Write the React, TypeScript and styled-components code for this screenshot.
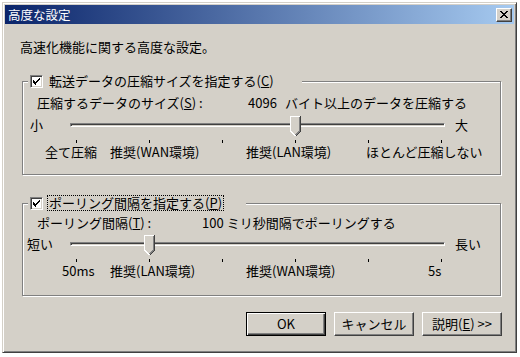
import React from 'react'
import styled, { createGlobalStyle } from 'styled-components'

const GlobalStyle = createGlobalStyle`
  html, body {
    margin: 0;
    padding: 0;
    background: #fff;
  }
  body {
    font-family: "Noto Sans CJK JP", "Noto Sans", sans-serif;
    font-size: 13px;
    line-height: 16px;
    color: #000;
  }
`

const Window = styled.div`
  box-sizing: border-box;
  width: 515px;
  height: 351px;
  margin: 2px 0 0 2px;
  padding: 2px;
  background: #d4d0c8;
  border: 1px solid;
  border-color: #d4d0c8 #404040 #404040 #d4d0c8;
  box-shadow: inset 1px 1px #fff, inset -1px -1px #808080;
  display: flex;
  flex-direction: column;
`

const TitleBar = styled.div`
  height: 19px;
  flex: none;
  display: flex;
  align-items: center;
  justify-content: space-between;
  padding: 0 2px 0 3px;
  font-size: 12.5px;
  background: linear-gradient(to right, #0a246a, #a6caf0);
  color: #fff;
`

const CloseButton = styled.div`
  box-sizing: border-box;
  width: 16px;
  height: 14px;
  display: flex;
  align-items: center;
  justify-content: center;
  background: #d4d0c8;
  border: 1px solid;
  border-color: #fff #404040 #404040 #fff;
  box-shadow: inset -1px -1px #808080;
`

const Body = styled.div`
  display: flex;
  flex-direction: column;
  padding-left: 17px;
`

const Intro = styled.div`
  margin: 15px 0 0 -2px;
`

const Group = styled.fieldset<{ $top: number; $bottom: number }>`
  box-sizing: border-box;
  width: 479px;
  min-width: 0;
  margin: ${p => p.$top}px 0 0;
  padding: 0 0 ${p => p.$bottom}px;
  border: 1px solid #808080;
  box-shadow: inset 1px 1px #fff, 1px 1px #fff;
`

const Legend = styled.legend<{ $width: number }>`
  box-sizing: border-box;
  width: ${p => p.$width}px;
  height: 16px;
  margin-left: 5px;
  padding: 0 0 0 2px;
  display: flex;
  align-items: center;
  background: #d4d0c8;
  white-space: nowrap;
`

const CheckBox = styled.span`
  box-sizing: border-box;
  width: 13px;
  height: 13px;
  flex: none;
  display: flex;
  align-items: center;
  justify-content: center;
  background: #fff;
  border: 1px solid;
  border-color: #808080 #fff #fff #808080;
  box-shadow: inset 1px 1px #404040, inset -1px -1px #d4d0c8;
`

const CheckLabel = styled.span<{ $focused?: boolean }>`
  margin-left: ${p => (p.$focused ? 4 : 5)}px;
  padding: 0 ${p => (p.$focused ? 1 : 0)}px;
  line-height: 14px;
  border: 1px ${p => (p.$focused ? 'dotted #000' : 'solid transparent')};
`

const ValueRow = styled.div<{ $top: number }>`
  display: flex;
  margin-top: ${p => p.$top}px;
  padding-left: 14px;
  white-space: nowrap;
`

const Caption = styled.span<{ $width: number }>`
  width: ${p => p.$width}px;
  flex: none;
`

const Amount = styled.span<{ $gap: number }>`
  margin-right: ${p => p.$gap}px;
`

const SliderRow = styled.div<{ $top: number }>`
  display: grid;
  grid-template-columns: 47px 375px 1fr;
  align-items: center;
  height: 22px;
  margin-top: ${p => p.$top}px;
  white-space: nowrap;
`

const EndLabel = styled.span<{ $pad: number }>`
  padding-left: ${p => p.$pad}px;
`

const TrackArea = styled.div`
  position: relative;
  height: 22px;
  display: flex;
  align-items: center;
`

const Channel = styled.div`
  box-sizing: border-box;
  width: 100%;
  height: 4px;
  background: #d4d0c8;
  border: 1px solid;
  border-color: #808080 #fff #fff #808080;
  box-shadow: inset 1px 1px #404040;
`

const Thumb = styled.svg`
  position: absolute;
  top: 2px;
  display: block;
`

const Ticks = styled.div<{ $top: number }>`
  display: flex;
  justify-content: space-between;
  width: 366px;
  height: 3px;
  margin: ${p => p.$top}px 0 0 53px;
`

const Tick = styled.span`
  width: 1px;
  background: #000;
`

const ScaleLabels = styled.div<{ $pad: number; $cols: string }>`
  display: grid;
  grid-template-columns: ${p => p.$cols};
  padding-left: ${p => p.$pad}px;
  margin-top: 1px;
  white-space: nowrap;
`

const ButtonRow = styled.div`
  display: flex;
  justify-content: flex-end;
  gap: 8px;
  margin-top: 16px;
  padding-right: 12px;
`

const Button = styled.button<{ $default?: boolean }>`
  box-sizing: border-box;
  width: 80px;
  height: 24px;
  padding: 0;
  font: inherit;
  color: #000;
  background: #d4d0c8;
  border: 1px solid;
  border-color: ${p => (p.$default ? '#000' : '#fff #404040 #404040 #fff')};
  box-shadow: ${p =>
    p.$default
      ? 'inset 1px 1px #fff, inset -1px -1px #404040, inset -2px -2px #808080'
      : 'inset -1px -1px #808080'};
`

const Key = styled.u`
  text-decoration: underline;
`

const TICK_STEP = 73

function SliderThumb({ index }: { index: number }) {
  return (
    <Thumb
      width="11"
      height="21"
      viewBox="0 0 11 21"
      shapeRendering="crispEdges"
      style={{ left: 1 + index * TICK_STEP }}
    >
      <polygon points="0,0 11,0 11,15 5.5,21 0,15" fill="#d4d0c8" />
      <polyline points="0.5,15 0.5,0.5 10,0.5" fill="none" stroke="#fff" />
      <polyline points="0.5,15 5.5,20" fill="none" stroke="#fff" />
      <polyline points="9.5,1 9.5,15 5.5,19" fill="none" stroke="#808080" />
      <polyline points="10.5,0 10.5,15.5 5.5,20.5" fill="none" stroke="#404040" />
    </Thumb>
  )
}

function Check() {
  return (
    <svg width="7" height="7" viewBox="0 0 7 7" shapeRendering="crispEdges">
      <path d="M0 2h1v1h-1zM0 3h2v1h-2zM0 4h3v1h-3zM1 5h2v1h-2zM2 6h1v1h-1zM3 3h1v2h-1zM4 2h1v2h-1zM5 1h1v2h-1zM6 0h1v2h-1z" fill="#000" />
    </svg>
  )
}

function Slider({
  left,
  right,
  leftPad,
  index,
  top,
}: {
  left: string
  right: string
  leftPad: number
  index: number
  top: number
}) {
  return (
    <>
      <SliderRow $top={top}>
        <EndLabel $pad={leftPad}>{left}</EndLabel>
        <TrackArea>
          <Channel />
          <SliderThumb index={index} />
        </TrackArea>
        <EndLabel $pad={10}>{right}</EndLabel>
      </SliderRow>
      <Ticks $top={4}>
        {[0, 1, 2, 3, 4, 5].map(i => (
          <Tick key={i} />
        ))}
      </Ticks>
    </>
  )
}

export default function App() {
  return (
    <>
      <GlobalStyle />
      <Window>
        <TitleBar>
          <span>高度な設定</span>
          <CloseButton>
            <svg width="8" height="7" viewBox="0 0 8 7" shapeRendering="crispEdges">
              <path
                d="M0 0h2v1h-2zM6 0h2v1h-2zM1 1h2v1h-2zM5 1h2v1h-2zM2 2h4v1h-4zM3 3h2v1h-2zM2 4h4v1h-4zM1 5h2v1h-2zM5 5h2v1h-2zM0 6h2v1h-2zM6 6h2v1h-2z"
                fill="#000"
              />
            </svg>
          </CloseButton>
        </TitleBar>
        <Body>
          <Intro>高速化機能に関する高度な設定。</Intro>

          <Group $top={18} $bottom={14}>
            <Legend $width={274}>
              <CheckBox>
                <Check />
              </CheckBox>
              <CheckLabel>
                転送データの圧縮サイズを指定する(<Key>C</Key>)
              </CheckLabel>
            </Legend>
            <ValueRow $top={6}>
              <Caption $width={211}>
                圧縮するデータのサイズ(<Key>S</Key>) :
              </Caption>
              <Amount $gap={8}>4096</Amount>
              <span>バイト以上のデータを圧縮する</span>
            </ValueRow>
            <Slider left="小" right="大" leftPad={7} index={3} top={3} />
            <ScaleLabels $pad={22} $cols="65px 136px 120px auto">
              <span>全て圧縮</span>
              <span>推奨(WAN環境)</span>
              <span>推奨(LAN環境)</span>
              <span>ほとんど圧縮しない</span>
            </ScaleLabels>
          </Group>

          <Group $top={20} $bottom={16}>
            <Legend $width={218}>
              <CheckBox>
                <Check />
              </CheckBox>
              <CheckLabel $focused>
                ポーリング間隔を指定する(<Key>P</Key>)
              </CheckLabel>
            </Legend>
            <ValueRow $top={4}>
              <Caption $width={165}>
                ポーリング間隔(<Key>T</Key>) :
              </Caption>
              <Amount $gap={3}>100</Amount>
              <span>ミリ秒間隔でポーリングする</span>
            </ValueRow>
            <Slider left="短い" right="長い" leftPad={4} index={1} top={2} />
            <ScaleLabels $pad={39} $cols="48px 136px 182px auto">
              <span>50ms</span>
              <span>推奨(LAN環境)</span>
              <span>推奨(WAN環境)</span>
              <span>5s</span>
            </ScaleLabels>
          </Group>

          <ButtonRow>
            <Button $default>OK</Button>
            <Button>キャンセル</Button>
            <Button>
              説明(<Key>E</Key>) &gt;&gt;
            </Button>
          </ButtonRow>
        </Body>
      </Window>
    </>
  )
}
